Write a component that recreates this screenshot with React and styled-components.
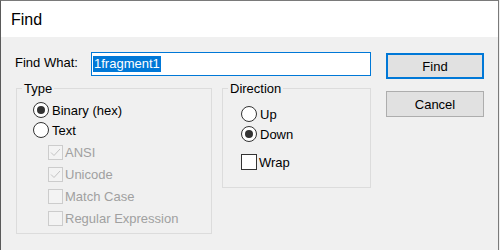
import React from "react";
import styled, { createGlobalStyle } from "styled-components";

const Global = createGlobalStyle`
  html, body { margin: 0; padding: 0; background: #f0f0f0; }
  body { font-family: "Liberation Sans", Arial, sans-serif; font-size: 13px; color: #000; }
  * { box-sizing: border-box; }
`;

const Window = styled.div`
  width: 499px;
  height: 250px;
  border-top: 1px solid #7a7a7a;
  border-left: 1px solid #5a5a5a;
  border-right: 1px solid #7a7a7a;
  background: #f0f0f0;
  display: flex;
  flex-direction: column;
`;

const TitleBar = styled.div`
  height: 36px;
  background: #fff;
  display: flex;
  align-items: center;
  padding-left: 10px;
  padding-top: 1px;
  font-size: 16px;
  color: #000;
`;

const Body = styled.div`
  flex: 1;
  display: flex;
  gap: 15px;
  padding: 15px 14px 0 14px;
`;

const LeftCol = styled.div`
  width: 356px;
  display: flex;
  flex-direction: column;
`;

const FindRow = styled.div`
  display: flex;
  align-items: flex-start;
`;

const Label = styled.label`
  width: 76px;
  line-height: 15px;
  margin-top: 3px;
  white-space: nowrap;
`;

const TextBox = styled.div`
  flex: 1;
  height: 24px;
  border: 1px solid #0078d7;
  background: #fff;
  display: flex;
  align-items: center;
  padding-left: 1px;
`;

const Selected = styled.span`
  background: #0078d7;
  color: #fff;
  line-height: 16px;
  padding: 0 1px;
`;

const Groups = styled.div`
  display: flex;
  align-items: flex-start;
  margin-top: 5px;
  gap: 10px;
`;

const Group = styled.fieldset`
  margin: 0 0 0 ${(p) => p.$ml || 0}px;
  padding: 0;
  border: 1px solid #dcdcdc;
  width: ${(p) => p.$w}px;
  min-width: 0;
`;

const Legend = styled.legend`
  margin-left: ${(p) => p.$offset}px;
  padding: 0 2px;
  line-height: 15px;
`;

const Rows = styled.div`
  display: flex;
  flex-direction: column;
  padding: ${(p) => p.$pt}px 0 ${(p) => p.$pb}px ${(p) => p.$pl}px;
`;

const RadioRow = styled.div`
  height: 20px;
  display: flex;
  align-items: center;
  gap: 3px;
`;

const CheckRow = styled.div`
  height: 22px;
  display: flex;
  align-items: center;
  gap: 2px;
  margin-left: ${(p) => p.$indent || 0}px;
  margin-top: ${(p) => p.$mt || 0}px;
  color: ${(p) => (p.$disabled ? "#a0a0a0" : "#000")};
`;

const RadioCircle = styled.span`
  width: 16px;
  height: 16px;
  border-radius: 50%;
  border: 1px solid #333;
  background: #fff;
  display: flex;
  align-items: center;
  justify-content: center;
  flex: none;
  &::after {
    content: "";
    width: 8px;
    height: 8px;
    border-radius: 50%;
    background: #333;
    display: ${(p) => (p.$checked ? "block" : "none")};
  }
`;

const CheckBox = styled.span`
  width: ${(p) => (p.$disabled ? 15 : 16)}px;
  height: ${(p) => (p.$disabled ? 15 : 16)}px;
  border: 1px solid ${(p) => (p.$disabled ? "#cccccc" : "#333")};
  background: ${(p) => (p.$disabled ? "#f3f3f3" : "#fff")};
  display: flex;
  align-items: center;
  justify-content: center;
  flex: none;
`;

const RightCol = styled.div`
  width: 98px;
  display: flex;
  flex-direction: column;
  padding-top: 1px;
  gap: 12px;
`;

const Button = styled.button`
  width: 98px;
  height: 26px;
  background: #e1e1e1;
  border: ${(p) => (p.$default ? "2px solid #0078d7" : "1px solid #adadad")};
  font-family: inherit;
  font-size: 13px;
  color: #000;
  padding: 0;
  margin: 0;
`;

const Radio = ({ checked, children }) => (
  <RadioRow>
    <RadioCircle $checked={checked} />
    <span>{children}</span>
  </RadioRow>
);

const Check = ({ checked, disabled, indent, mt, children }) => (
  <CheckRow $disabled={disabled} $indent={indent} $mt={mt}>
    <CheckBox $disabled={disabled}>
      {checked && (
        <svg width="13" height="13" viewBox="0 0 13 13">
          <path d="M2 6.5 L5 9.5 L11 3" fill="none" stroke="#c4c4c4" strokeWidth="1" />
        </svg>
      )}
    </CheckBox>
    <span>{children}</span>
  </CheckRow>
);

export default function App() {
  return (
    <>
      <Global />
      <Window>
        <TitleBar>Find</TitleBar>
        <Body>
          <LeftCol>
            <FindRow>
              <Label>Find What:</Label>
              <TextBox>
                <Selected>1fragment1</Selected>
              </TextBox>
            </FindRow>
            <Groups>
              <Group $w={196} $ml={1}>
                <Legend $offset={5}>Type</Legend>
                <Rows $pt={4} $pb={4} $pl={16}>
                  <Radio checked>Binary (hex)</Radio>
                  <Radio>Text</Radio>
                  <Check checked disabled indent={15} mt={1}>ANSI</Check>
                  <Check checked disabled indent={15}>Unicode</Check>
                  <Check disabled indent={15}>Match Case</Check>
                  <Check disabled indent={15}>Regular Expression</Check>
                </Rows>
              </Group>
              <Group $w={149}>
                <Legend $offset={5}>Direction</Legend>
                <Rows $pt={8} $pb={14} $pl={18}>
                  <Radio>Up</Radio>
                  <Radio checked>Down</Radio>
                  <Check mt={7}>Wrap</Check>
                </Rows>
              </Group>
            </Groups>
          </LeftCol>
          <RightCol>
            <Button $default>Find</Button>
            <Button>Cancel</Button>
          </RightCol>
        </Body>
      </Window>
    </>
  );
}
